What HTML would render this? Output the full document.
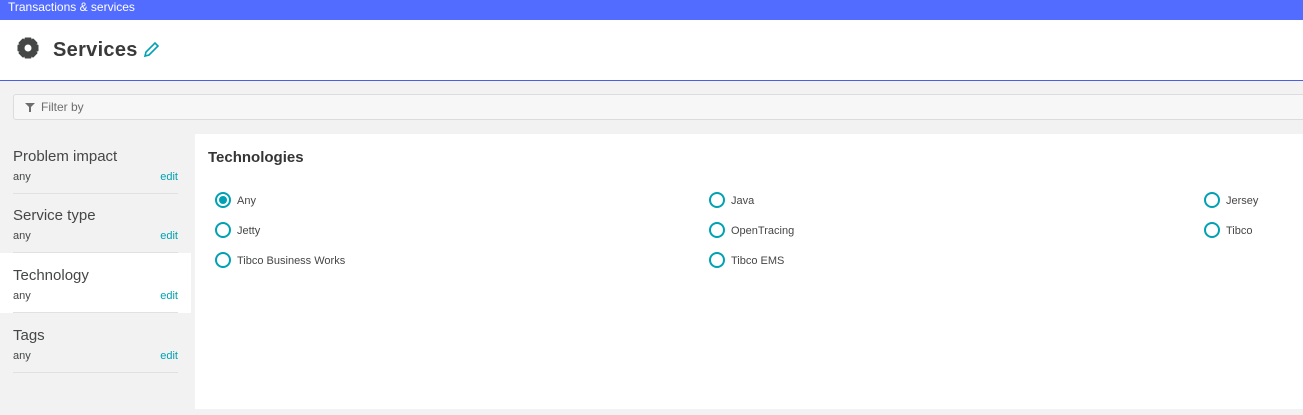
<!DOCTYPE html>
<html><head><meta charset="utf-8"><style>
*{margin:0;padding:0;box-sizing:border-box}
body{width:1303px;height:415px;background:#f2f2f2;font-family:"Liberation Sans",sans-serif;position:relative;overflow:hidden;color:#454646}
.top{position:absolute;left:0;top:0;width:1303px;height:20px;background:#526cff;color:#fff;font-size:12px;line-height:15px;padding-left:8px}
.hdr{position:absolute;left:0;top:20px;width:1303px;height:61px;background:#fff;border-bottom:1px solid #4a5ee8}
.hdr h1{position:absolute;left:53px;top:19px;font-size:20px;font-weight:bold;color:#3a3a3a;letter-spacing:0.3px}
.filter{position:absolute;left:13px;top:94px;width:1300px;height:26px;background:#f7f7f7;border:1px solid #dcdcdc;border-radius:3px;font-size:12px;color:#6d6d6d;line-height:24px;padding-left:27px}
.item{position:absolute;left:0;width:191px;height:60px}
.item .t{position:absolute;left:13px;top:14px;font-size:15px;color:#454646}
.item .a{position:absolute;left:13px;top:37px;font-size:11px;color:#454646}
.item .e{position:absolute;right:13px;top:37px;font-size:11px;color:#00a1b2}
.item .l{position:absolute;left:13px;right:13px;bottom:0;height:1px;background:#e1e1e1}
.main{position:absolute;left:195px;top:134px;width:1108px;height:275px;background:#fff}
.main h2{position:absolute;left:13px;top:15px;font-size:15px;font-weight:bold;color:#353535}
.r{position:absolute;font-size:11px;color:#454646;line-height:14px}
.r i{position:absolute;left:-22px;top:-2px;width:16px;height:16px;border:2px solid #00a1b2;border-radius:50%}
.r i.on::after{content:"";position:absolute;left:2px;top:2px;width:8px;height:8px;border-radius:50%;background:#00a1b2}
</style></head><body>
<div class="top">Transactions &amp; services</div>
<div class="hdr">
<svg style="position:absolute;left:17px;top:17px" width="22" height="22" viewBox="0 0 22 22"><g fill="#454646"><circle cx="11" cy="11" r="8.5"/><rect x="7.5" y="0.5" width="7" height="21" rx="1"/><rect x="0.5" y="7.5" width="21" height="7" rx="1"/><rect x="7.5" y="0.5" width="7" height="21" rx="1" transform="rotate(45 11 11)"/><rect x="7.5" y="0.5" width="7" height="21" rx="1" transform="rotate(-45 11 11)"/></g><circle cx="11" cy="11" r="3.5" fill="#fff"/></svg>
<h1>Services</h1>
<svg style="position:absolute;left:143px;top:21px" width="17" height="17" viewBox="0 0 17 17"><path d="M2 15 L3 11 L12 2 L15 5 L6 14 Z" fill="none" stroke="#00a1b2" stroke-width="1.6"/></svg>
</div>
<div class="filter"><svg style="position:absolute;left:11px;top:8px" width="10" height="10" viewBox="0 0 10 10"><path d="M0 0H10L6 4V9H4V4Z" fill="#6d6d6d"/></svg>Filter by</div>
<div class="item" style="top:134px"><div class="t">Problem impact</div><div class="a">any</div><div class="e">edit</div><div class="l"></div></div>
<div class="item" style="top:193px"><div class="t">Service type</div><div class="a">any</div><div class="e">edit</div><div class="l"></div></div>
<div class="item" style="top:253px;background:#fff"><div class="t">Technology</div><div class="a">any</div><div class="e">edit</div><div class="l"></div></div>
<div class="item" style="top:313px"><div class="t">Tags</div><div class="a">any</div><div class="e">edit</div><div class="l"></div></div>
<div class="main"><h2>Technologies</h2></div>
<div class="r" style="left:237px;top:194px"><i class="on"></i>Any</div>
<div class="r" style="left:237px;top:224px"><i></i>Jetty</div>
<div class="r" style="left:237px;top:254px"><i></i>Tibco Business Works</div>
<div class="r" style="left:731px;top:194px"><i></i>Java</div>
<div class="r" style="left:731px;top:224px"><i></i>OpenTracing</div>
<div class="r" style="left:731px;top:254px"><i></i>Tibco EMS</div>
<div class="r" style="left:1226px;top:194px"><i></i>Jersey</div>
<div class="r" style="left:1226px;top:224px"><i></i>Tibco</div>
</body></html>
